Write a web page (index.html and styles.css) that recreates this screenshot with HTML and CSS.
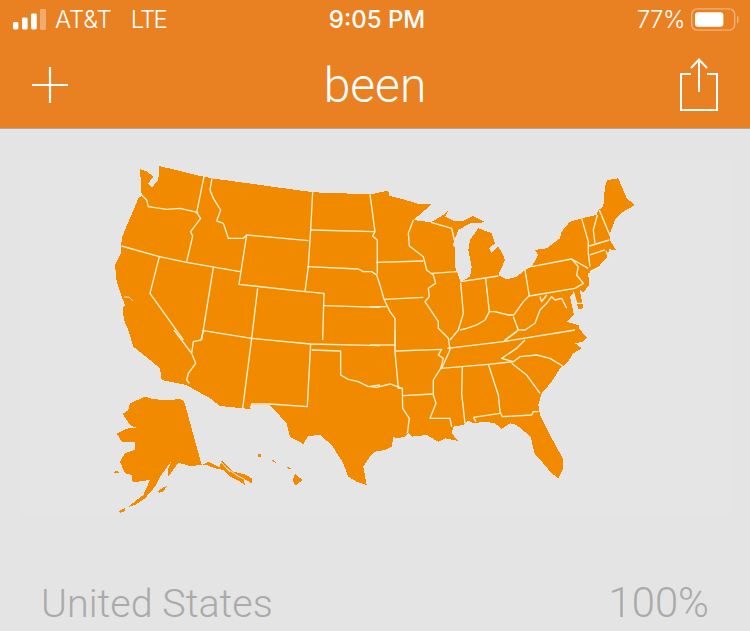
FILE: index.html
```html
<!DOCTYPE html>
<html lang="en">
<head>
<meta charset="utf-8">
<title>been</title>
<link rel="stylesheet" href="styles.css">
</head>
<body>
<header class="top">
  <div class="status">
    <div class="status-left">
      <svg class="signal" width="33" height="22" viewBox="13 9 33 22"><rect x="13" y="22" width="5.4" height="7.4" rx="1.4" fill="#fff"/><rect x="22" y="17.5" width="5.6" height="11.9" rx="1.4" fill="#fff"/><rect x="31" y="13.4" width="5.8" height="16" rx="1.4" fill="#fff"/><rect x="40" y="9" width="6" height="21" rx="1.4" fill="#fff" opacity=".35"/></svg>
      <span class="carrier">AT&amp;T</span>
      <span class="network">LTE</span>
    </div>
    <div class="time">9:05 PM</div>
    <div class="status-right">
      <span class="pct">77%</span>
      <svg class="battery" width="48" height="24" viewBox="691 8 48 24"><rect x="691.7" y="8.9" width="43" height="21.2" rx="5.5" fill="none" stroke="#fff" stroke-opacity=".4" stroke-width="1.4"/><rect x="695" y="12.3" width="28.4" height="14.4" rx="3" fill="#fff"/><path d="M737 15.5c1.3.5 1.6 1.8 1.6 4s-.3 3.500-1.600 4z" fill="#fff" fill-opacity=".45"/></svg>
    </div>
  </div>
  <nav class="nav">
    <svg class="plus" width="36" height="36" viewBox="0 0 36 36"><path d="M18 0v36M0 18h36" stroke="#fff" stroke-width="2.200" fill="none"/></svg>
    <h1 class="title">been</h1>
    <svg class="share" width="40" height="54" viewBox="679 57 40 54"><path d="M691 73h-10v36h36v-36h-10M699 91v-33M691 67l8-8.500 8 8.500" stroke="#fff" stroke-width="2" fill="none"/></svg>
  </nav>
</header>
<main class="content">
  <div class="map">
    <svg class="map-svg" width="710" height="355" viewBox="20 160 710 355" role="img" aria-label="Map of the United States">
      <g class="land">
        <path d="M140,169.300 147,171.500 153.300,176.700 148.300,183.300 151.700,187.700 158.300,180 159.300,166 203.300,176.700 211.700,178.300 313.300,192.300 370,194.300 371.700,194.300 388,190.500 389.300,195.700 403.300,199.300 420,204.300 431.700,204 425,210 413.300,220 431,222.300 443.300,215 448.300,210 445,216.700 453.300,220.700 463.300,220.700 473.300,216 485,222.300 470,223.300 458.300,230 452.700,245 455,247.300 455,266.700 460.700,281.700 470,276.700 471.700,266.700 468.300,250 470,240 478.300,228.300 491.700,233.300 495,243.300 489.300,248.300 491.700,253.300 498.300,246.700 503.300,255 505,260 498.300,275 506.700,279.300 516.700,276.700 525,270 531.700,266.700 538.300,255 535,250 546.700,248.300 560,238.300 561.700,231.700 570,221.700 581.700,218.300 596.700,215 598.300,210 603.300,206.700 605,186.700 607.300,180 618.300,178.300 626.700,198.300 635,205 623.300,211.700 615,220 609.300,235 610,240 616,250 609.300,249.300 607.300,257.300 600,265 598,267 588.300,273.300 589,285 583.300,292.700 579.300,288.300 583.300,308.300 578.300,309 574,292 570,296.700 574,315 566.700,321.700 580,325.700 578.300,328 581.700,331.700 586.700,337.300 583.300,341.700 575,343.300 581.700,348.300 573.300,353.300 566.700,363.300 560,368.300 551.700,381.700 541.700,393.300 538.300,405 540,415 550,435 562.700,458.300 562.700,470 558.300,478.300 551.700,473.300 543.300,463.300 535,455 533.300,448.300 530.700,436.700 516.700,425 510,423.300 501.700,429 495,423.300 485,421.700 473.300,423.300 468.300,420.700 463.300,425 453.300,426.700 451.700,433.300 458.300,441 445,438.300 438.300,441.700 426.700,435 411.700,436.700 408.300,433.300 405,436.700 396.700,438.300 393.300,436.700 391.700,446.700 385,450 375,451.700 370,456.700 363.300,466.700 366.700,485 356.700,481.700 348.300,476.700 343.300,463.300 331.700,445 320,435 308.300,436 303.300,444 290,436.700 286.700,423.300 270,405 251.700,405 250.700,409 243.300,408.300 220,406 210,398.300 186,385 161.700,380 160,368.300 150,360 133.300,346.700 128.300,330 124,320 122.700,308.300 125,305 121.700,296.700 116.700,281.700 115,265 121,253.300 121.700,238.300 125,230 135,206.700 138.300,198.300 141.700,196 141,183.300z"/>
        <path d="M145,396.700 130,403.300 128.300,410 122.700,414 130,425 137.700,428.300 128.300,428.300 116.700,433.300 121.700,441.700 135,441.700 135,450 125,453.300 120,461.700 125,473.300 131.700,475 132.700,482.300 150,480 143.300,495 133.300,502.700 129.300,506.700 135,505 145,498.300 155,486.700 160,476.700 171.700,460.700 167.700,470 168.300,476.700 178.300,462.700 190,466 201.700,465 208.300,461.700 219.300,467.300 221.700,460.700 233.300,471.700 246.700,475 251.700,478.300 251.700,483.300 243.300,478.300 245,485 238.300,480.700 230,476.700 223.300,470 215,468.300 206.700,465 201.700,465 184,400.700 180,399.300 161.700,400 150,398.300z"/>
        <path d="M158,491 164,487 167,486 164,491 159,493zM119,511 125,508 125,511 120,513zM114,472 118,470.500 119,473 115,473.500zM257.500,454 261,454.500 260.500,457 258,457zM272,460 275,461 276,463 273,462zM287,467 291,468 291,469.500 288,469zM295,474 302.700,480 295,485.700 292.700,480z"/>
      </g>
      <path class="gap" d="M124,297 129,297 133,301M221,462 230,472M226,468 238,476M236,475 244,479"/>
      <g class="lines" transform="translate(100 150) scale(.3333)">
        <path d="M125,135L140,150 145,170 180,175 200,178 240,175 295,188"/>
        <path d="M312,80L290,188 302,205 272,245 278,258 260,335"/>
        <path d="M336,85L330,120 340,145 362,180 350,213 370,220 385,265 430,265 440,255 625,272"/>
        <path d="M440,255L417,403 615,425 672,430 668,570"/>
        <path d="M638,127L632,240 625,350 615,425"/>
        <path d="M632,240L825,245"/>
        <path d="M810,133L815,170 825,245 818,258 832,270 832,372"/>
        <path d="M622,350L775,357 790,365 815,365 830,375 840,405"/>
        <path d="M672,467L840,472"/>
        <path d="M65,288L178,320 260,337 420,365"/>
        <path d="M178,320L150,430 250,570"/>
        <path d="M340,353L305,570"/>
        <path d="M473,415L455,565"/>
      </g>
      <g class="lines" transform="translate(100 330) scale(.3333)">
        <path d="M222,0L275,70"/>
        <path d="M310,2L455,25 632,42 840,47"/>
        <path d="M310,2L303,30 280,35 275,70 287,100 265,130 260,150 268,160"/>
        <path d="M455,25L428,235"/>
        <path d="M632,42L622,230 510,222 455,222 452,235"/>
        <path d="M635,60L722,63 722,135 745,148 775,155 805,170 840,165"/>
      </g>
      <g class="lines" transform="translate(370 330) scale(.3333)">
        <path d="M0,170L20,172 60,162 97,175 98,235 118,265 112,310"/>
        <path d="M75,0L75,65 85,175 97,175"/>
        <path d="M0,45L75,45"/>
        <path d="M78,63L215,58 205,75 220,85 212,115 190,150 190,195 198,220 180,265 240,265 245,290"/>
        <path d="M100,197L188,192"/>
        <path d="M212,115L275,110 355,103 430,95 395,85 440,55 465,30"/>
        <path d="M232,55L400,35 615,0"/>
        <path d="M400,35L440,5"/>
        <path d="M430,95L450,80 500,75 540,85 578,108"/>
        <path d="M425,100L470,135 510,190"/>
        <path d="M355,103L385,195 390,245 397,260 485,255 490,245 505,245"/>
        <path d="M277,112L275,190 285,280"/>
        <path d="M310,262L390,250M310,262L318,275"/>
        <path d="M240,60L215,115"/>
      </g>
      <g class="lines" transform="translate(370 160) scale(.3333)">
        <path d="M130,180L115,220 118,258 160,290 170,330 190,345 197,370 175,385 178,410 165,425 185,455 205,485 205,505 235,535 240,570"/>
        <path d="M18,307L160,303"/>
        <path d="M42,418L160,412"/>
        <path d="M0,440L50,440"/>
        <path d="M30,375L42,418 60,455 75,475 75,570"/>
        <path d="M185,340L260,335"/>
        <path d="M183,187L245,205 253,240"/>
        <path d="M272,368L280,460 265,510 240,540"/>
        <path d="M272,365L385,348"/>
        <path d="M347,355L358,455"/>
        <path d="M270,510L290,505 320,495 345,480 358,455 375,455 415,465 432,465 460,425 480,405"/>
        <path d="M465,330L478,408 615,385"/>
        <path d="M485,320L605,297 625,320 620,345 640,370 615,385"/>
        <path d="M605,297L655,325"/>
        <path d="M635,175L655,245 655,280 660,320"/>
        <path d="M682,165L670,210 675,250"/>
        <path d="M688,150L718,222"/>
        <path d="M658,258L718,240"/>
        <path d="M660,285L705,270M708,272L715,290"/>
        <path d="M660,335L690,320"/>
        <path d="M430,470L445,510 465,510 495,490 510,450 530,430 545,410 555,420 575,415 590,445"/>
        <path d="M445,510L405,540"/>
        <path d="M510,410L515,425 530,405"/>
        <path d="M610,395L620,430 640,430"/>
      </g>
    </svg>
  </div>
  <div class="row">
    <span class="name">United States</span>
    <span class="percent">100%</span>
  </div>
</main>
</body>
</html>
```
FILE: styles.css
```css
* {
  box-sizing: border-box;
}

html,
body {
  margin: 0;
  height: 100%;
  overflow: hidden;
}

body {
  background: #e4e4e4;
  font-family: "Liberation Sans", Arial, sans-serif;
}

.top {
  height: 129px;
  background: #e98022;
  border-bottom: 1px solid #a8a8a8;
  color: #fff;
}

.status {
  height: 43px;
  padding: 0 11px 4px 13px;
  display: grid;
  grid-template-columns: 1fr auto 1fr;
  align-items: center;
  font-family: Inter, "Liberation Sans", sans-serif;
  font-weight: 300;
  font-size: 24px;
}

.status-left,
.status-right {
  display: flex;
  align-items: baseline;
}

.status-left svg,
.status-right svg {
  align-self: center;
}

.status-right {
  justify-content: flex-end;
}

.signal {
  margin-right: 9px;
}

.carrier {
  margin-right: 19px;
  letter-spacing: -0.2px;
}

.network {
  letter-spacing: -1.8px;
}

.time {
  font-weight: 500;
  padding-left: 2px;
}

.pct {
  margin-right: 6px;
  letter-spacing: -0.5px;
}

.nav {
  height: 85px;
  padding: 0 31px 0 32px;
  display: flex;
  align-items: center;
  justify-content: space-between;
}

.plus {
  margin-top: -2px;
}

.title {
  margin: 0 0 0 3px;
  font-family: Roboto, sans-serif;
  font-weight: 300;
  font-size: 48px;
  line-height: 1;
}

.share {
  margin-top: -2px;
}

.content {
  padding: 31px 20px 0;
}

.map {
  height: 355px;
  background: #e5e5e5;
}

.map-svg {
  display: block;
}

.land {
  shape-rendering: crispEdges;
}

.land path {
  fill: #f28a00;
}

.gap {
  fill: none;
  stroke: #e5e5e5;
  stroke-width: 1;
}

.lines {
  fill: none;
}

.lines path {
  fill: none;
  stroke: #fbf1d2;
  stroke-width: 4;
  stroke-linejoin: round;
}

.row {
  margin-top: 66px;
  padding: 0 21px;
  display: flex;
  justify-content: space-between;
  align-items: baseline;
  font-family: Roboto, sans-serif;
  font-weight: 300;
  line-height: 44px;
  color: #aaaaaa;
}

.name {
  font-size: 39.500px;
}

.percent {
  font-size: 41.800px;
}
```
